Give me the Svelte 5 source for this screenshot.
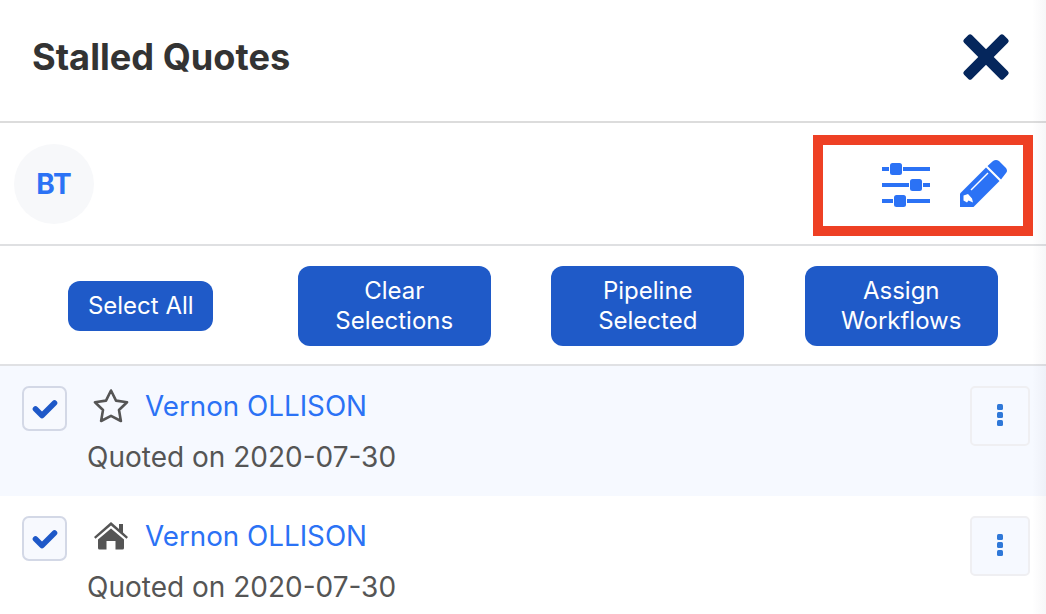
<script>
  const actions = [
    { label: ['Select All'], small: true },
    { label: ['Clear', 'Selections'] },
    { label: ['Pipeline', 'Selected'] },
    { label: ['Assign', 'Workflows'] }
  ];
  const quotes = [
    { name: 'Vernon OLLISON', date: '2020-07-30', icon: 'star', active: true },
    { name: 'Vernon OLLISON', date: '2020-07-30', icon: 'home', active: false }
  ];
</script>

<div class="panel">
  <header class="top">
    <h1>Stalled Quotes</h1>
    <button class="close" aria-label="Close">
      <svg width="48" height="48" viewBox="0 0 48 48" fill="#05265c">
        <rect x="-4" y="18.5" width="56" height="11" rx="2.5" transform="rotate(45 24 24)" />
        <rect x="-4" y="18.5" width="56" height="11" rx="2.5" transform="rotate(-45 24 24)" />
      </svg>
    </button>
  </header>

  <section class="toolbar">
    <div class="avatar">BT</div>
    <div class="tools">
      <svg width="48" height="48" viewBox="0 0 48 48" fill="#2b72f5">
        <rect x="0" y="8" width="7" height="4" />
        <rect x="21" y="8" width="27" height="4" />
        <rect x="8" y="4" width="12" height="12" rx="2.5" />
        <rect x="0" y="24" width="27" height="4" />
        <rect x="41" y="24" width="7" height="4" />
        <rect x="28" y="20" width="12" height="12" rx="2.5" />
        <rect x="0" y="40" width="11" height="4" />
        <rect x="25" y="40" width="23" height="4" />
        <rect x="12" y="36" width="12" height="12" rx="2.5" />
      </svg>
      <svg width="48" height="48" viewBox="0 0 48 48">
        <path fill="#2b72f5" d="M26 8.5 L39.5 22 L13.5 48 L0 48 L0 34.5 Z" />
        <path fill="#2b72f5" d="M27.5 7 L33 2 Q36 0 39 2 L46 9 Q48 12 46 14 L41 20.5 Z" />
        <path stroke="#fff" stroke-width="1.4" d="M11 31 L28 14" />
        <path fill="#fff" d="M3.5 36.5 L8 35 L12 39.5 L13 43.5 L8.5 41.5 L7 43.5 L3.5 41.5 Z" />
      </svg>
    </div>
  </section>

  <section class="actions">
    {#each actions as a}
      <button class="action" class:small={a.small}>
        {#each a.label as line}<span>{line}</span>{/each}
      </button>
    {/each}
  </section>

  <ul>
    {#each quotes as q}
      <li class:active={q.active}>
        <span class="check">
          <svg width="26" height="22" viewBox="0 0 26 22">
            <path d="M3.5 11 L10 17.5 L22.5 5" stroke="#1e58c8" stroke-width="5.6" stroke-linecap="round" stroke-linejoin="round" fill="none" />
          </svg>
        </span>
        <div class="body">
          <div class="title">
            {#if q.icon === 'star'}
              <svg width="36" height="34" viewBox="0 0 36 34">
                <path d="M18 1.5 L23 11.6 L34 13.2 L26 21 L27.9 32 L18 26.8 L8.1 32 L10 21 L2 13.2 L13 11.6 Z" fill="none" stroke="#555" stroke-width="2.6" stroke-linejoin="round" />
              </svg>
            {:else}
              <svg width="36" height="30" viewBox="0 0 36 30">
                <path fill="#555" d="M18 1 L26 8 V3 H30 V11.5 L35 16 L33.5 17.7 L18 4.5 L2.5 17.7 L1 16 Z" />
                <path fill="#555" d="M18 7.5 L31 18.5 V27 Q31 28.5 29.5 28.5 H22.5 V20 H13.5 V28.5 H6.5 Q5 28.5 5 27 V18.5 Z" />
              </svg>
            {/if}
            <a href="#quote">{q.name}</a>
          </div>
          <p>Quoted on {q.date}</p>
        </div>
        <button class="more" aria-label="More">
          <i></i><i></i><i></i>
        </button>
      </li>
    {/each}
  </ul>
</div>

<style>
  :global(body) {
    margin: 0;
    background: #fff;
    font-family: Inter, "Liberation Sans", sans-serif;
    overflow: hidden;
  }
  .panel {
    width: 1046px;
    height: 614px;
    overflow: hidden;
    position: relative;
  }
  .panel::after {
    content: '';
    position: absolute;
    top: 0;
    right: 0;
    bottom: 0;
    width: 14px;
    background: linear-gradient(to right, rgba(60, 60, 90, 0), rgba(60, 60, 90, 0.045));
    pointer-events: none;
  }
  .top {
    height: 123px;
    display: flex;
    align-items: center;
    justify-content: space-between;
    padding: 0 36px 8px 32px;
    box-sizing: border-box;
    border-bottom: 2px solid #dcdcdc;
  }
  h1 {
    margin: 0;
    font-size: 36.2px;
    font-weight: 700;
    color: #333;
  }
  .close {
    background: none;
    border: 0;
    padding: 0;
    margin: 0;
    display: flex;
    width: 48px;
    height: 48px;
  }
  .toolbar {
    height: 123px;
    box-sizing: border-box;
    border-bottom: 2px solid #dfe0e2;
    display: flex;
    align-items: center;
    justify-content: space-between;
    padding: 0 13px 0 14px;
  }
  .avatar {
    width: 80px;
    height: 80px;
    border-radius: 50%;
    background: #f7f8fa;
    color: #2b72f5;
    font-weight: 700;
    font-size: 28px;
    display: flex;
    align-items: center;
    justify-content: center;
  }
  .tools {
    width: 220px;
    height: 101px;
    box-sizing: border-box;
    border: 10px solid #ee4024;
    display: flex;
    align-items: center;
    justify-content: flex-end;
    gap: 30px;
    padding: 0 15px 5px 0;
    margin-top: 4px;
  }
  .actions {
    height: 120px;
    box-sizing: border-box;
    border-bottom: 2px solid #e0e1e4;
    display: grid;
    grid-template-columns: repeat(4, 1fr);
    align-items: center;
    justify-items: center;
    padding: 2px 18px 0 14px;
  }
  .action {
    width: 193px;
    height: 80px;
    border: 0;
    border-radius: 12px;
    background: #1f5ac8;
    color: #fff;
    font: 400 24px/30px Inter, "Liberation Sans", sans-serif;
    display: flex;
    flex-direction: column;
    align-items: center;
    justify-content: center;
    padding: 0;
  }
  .action.small {
    width: 145px;
    height: 50px;
  }
  ul {
    list-style: none;
    margin: 0;
    padding: 0;
  }
  li {
    height: 130px;
    display: flex;
    align-items: flex-start;
    padding: 20px 16px 0 22px;
    box-sizing: border-box;
  }
  li.active {
    background: #f6f9ff;
  }
  .check {
    width: 45px;
    height: 45px;
    box-sizing: border-box;
    border: 2px solid #d3d8e6;
    border-radius: 7px;
    background: #f7f9fe;
    display: flex;
    align-items: center;
    justify-content: center;
  }
  .body {
    flex: 1;
    margin-left: 20px;
  }
  .title {
    display: flex;
    align-items: center;
    height: 40px;
    gap: 16px;
    margin-left: 6px;
  }
  .title a {
    color: #2b72f5;
    text-decoration: none;
    font-size: 27.75px;
  }
  p {
    margin: 11px 0 0;
    color: #555;
    font-size: 28px;
    line-height: 40px;
  }
  .more {
    width: 60px;
    height: 60px;
    box-sizing: border-box;
    border: 2px solid #efeff2;
    border-radius: 5px;
    background: #f6f9ff;
    display: flex;
    flex-direction: column;
    align-items: center;
    justify-content: center;
    gap: 2px;
    padding: 0 0 2px;
  }
  .more i {
    width: 6px;
    height: 6px;
    border-radius: 1.5px;
    background: #2f78d8;
  }
</style>
